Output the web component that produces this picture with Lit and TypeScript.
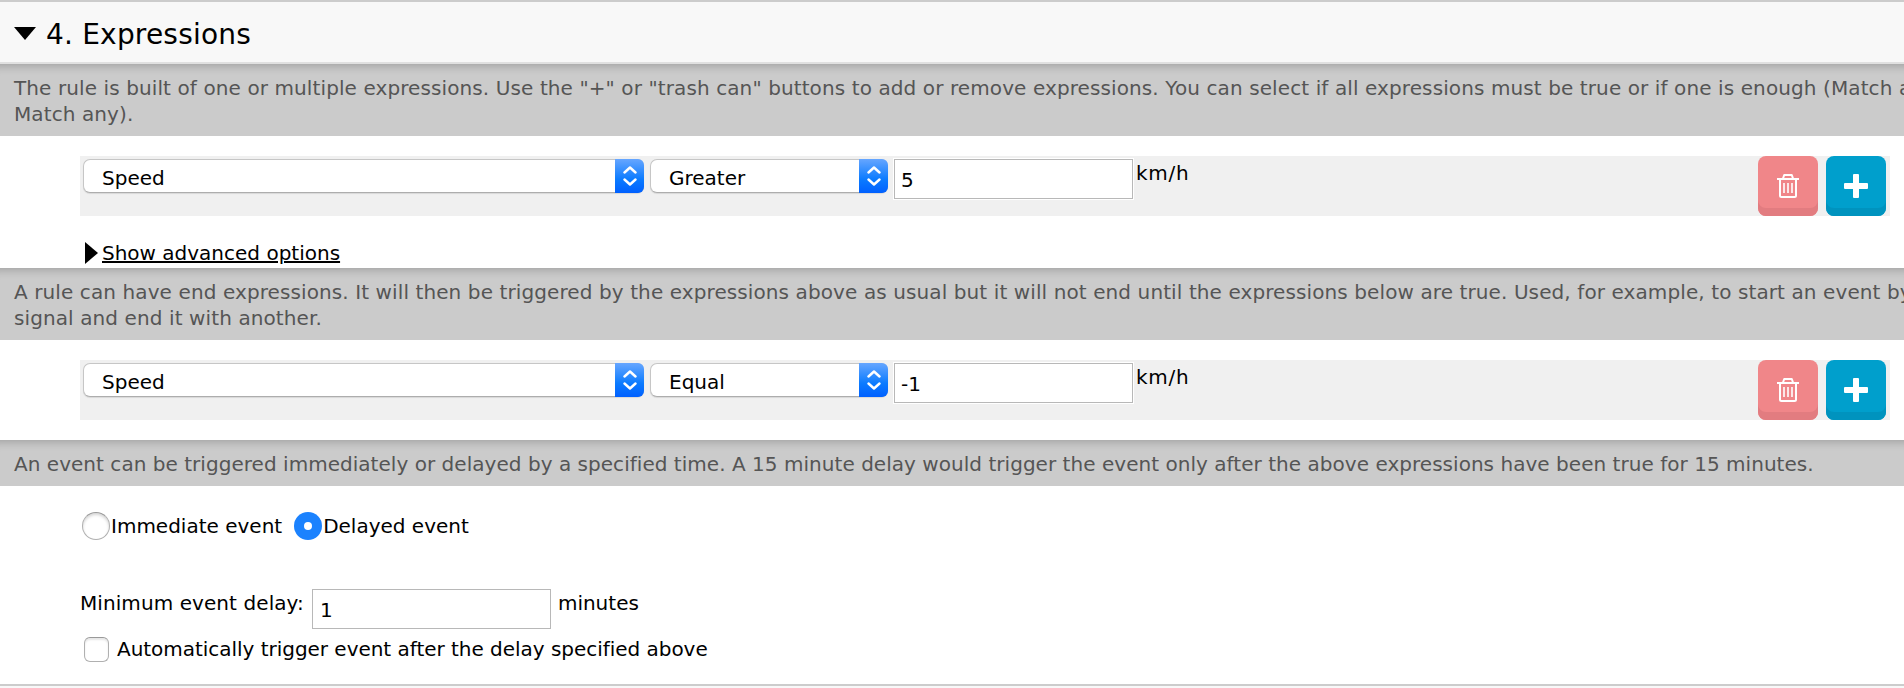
import { LitElement, html, css, svg } from "lit";
import { customElement, property } from "lit/decorators.js";

const trashIcon = svg`<svg width="24" height="26" viewBox="0 0 24 26" fill="none" stroke="#fff" stroke-width="2">
  <path d="M1 6H23" /><path d="M7 5.5L8.2 2H15.8L17 5.5" stroke-linejoin="round" />
  <path d="M4 6V22.5Q4 24 5.5 24H18.5Q20 24 20 22.5V6" />
  <path d="M8 10V20M12 10V20M16 10V20" stroke-width="1.6" /></svg>`;

const plusIcon = svg`<svg width="24" height="24" viewBox="0 0 24 24" fill="#fff">
  <path d="M10 0H14Q15 0 15 1V9H23Q24 9 24 10V14Q24 15 23 15H15V23Q15 24 14 24H10Q9 24 9 23V15H1Q0 15 0 14V10Q0 9 1 9H9V1Q9 0 10 0Z" /></svg>`;

@customElement("expression-row")
class ExpressionRow extends LitElement {
  @property() signal = "";
  @property() operator = "";
  @property() value = "";
  @property() unit = "";

  static styles = css`
    :host { display: flex; height: 60px; margin-left: 80px; margin-right: 14px; background: #f0f0f0; align-items: flex-start; line-height: 26px; }
    .select { display: flex; height: 34px; margin-top: 3px; box-sizing: border-box; border: 1px solid #c6c6c6; border-bottom-color: #adadad; border-right: 0; border-radius: 7px; background: #fff; box-shadow: 0 1px 1px rgba(0,0,0,.1); }
    .signal { width: 561px; margin-left: 3px; }
    .operator { width: 238px; margin-left: 6px; }
    .label { flex: 1; padding: 5px 0 0 18px; }
    .arrows { width: 29px; margin: -1px 0; display: flex; align-items: center; justify-content: center; border-radius: 0 6px 6px 0; background: linear-gradient(#66a6ff, #0b7bff 60%, #0060ff); }
    .input { width: 239px; height: 40px; box-sizing: border-box; margin: 3px 0 0 6px; border: 1px solid #b8b8b8; box-shadow: 0 0 0 1px #fff; background: #fff; padding: 7px 0 0 6px; }
    .unit { padding: 4px 0 0 3px; flex: 1; letter-spacing: .7px; }
    .btn { width: 60px; height: 60px; box-sizing: border-box; border-radius: 8px; display: flex; align-items: center; justify-content: center; margin-right: 8px; }
    .remove { background: #f08689; box-shadow: inset 0 -8px 0 #e27c80; }
    .add { background: #009fcc; box-shadow: inset 0 -8px 0 #0093be; margin-right: 4px; }
  `;

  private select(kind: string, text: string) {
    return html`<div class="select ${kind}"><span class="label">${text}</span>
      <span class="arrows"><svg width="14" height="20" viewBox="0 0 14 20" fill="none" stroke="#fff" stroke-width="2.4" stroke-linecap="round" stroke-linejoin="round"><path d="M1.5 6.5L7 1.5L12.5 6.5M1.5 13.5L7 18.5L12.5 13.5" /></svg></span></div>`;
  }

  render() {
    return html`${this.select("signal", this.signal)}${this.select("operator", this.operator)}
      <div class="input">${this.value}</div><span class="unit">${this.unit}</span>
      <div class="btn remove">${trashIcon}</div><div class="btn add">${plusIcon}</div>`;
  }
}

@customElement("app-root")
class AppRoot extends LitElement {
  static styles = css`
    :host { display: block; width: 1904px; height: 688px; overflow: hidden; background: #fff; font: 20px/26px "DejaVu Sans", Verdana, sans-serif; color: #000; white-space: nowrap; }
    .head { box-sizing: border-box; height: 64px; border-top: 2px solid #ccc; border-bottom: 2px solid #e0e0e0; background: #f8f8f8; display: flex; align-items: center; padding-left: 14px; font-size: 28px; gap: 10px; letter-spacing: .2px; }
    .head span { padding-top: 5px; }
    .head svg { margin-top: 3px; }
    .note { box-sizing: border-box; padding: 11px 0 9px 14px; background: #cbcbcb; color: #555; box-shadow: inset 0 12px 10px -10px rgba(0,0,0,.22); overflow: hidden; letter-spacing: .1px; }
    .single { height: 46px; letter-spacing: .035px; }
    .body { padding: 20px 0; }
    .first { height: 132px; box-sizing: border-box; }
    .adv { display: flex; align-items: center; margin: 24px 0 0 85px; gap: 4px; }
    .adv span { text-decoration: underline; }
    .settings { box-sizing: border-box; height: 198px; padding-left: 80px; }
    .radios { display: flex; align-items: center; padding-top: 26px; height: 28px; }
    .radios span { padding-left: 1px; }
    .radio { box-sizing: border-box; width: 28px; height: 28px; border: 1px solid #b0b0b0; border-top-color: #999; border-radius: 50%; box-shadow: inset 0 2px 3px rgba(0,0,0,.16); margin-left: 2px; }
    .on { border: 0; background: #1b82fe; display: flex; align-items: center; justify-content: center; margin-left: 12px; box-shadow: none; }
    .on::after { content: ""; width: 8px; height: 8px; border-radius: 50%; background: #fff; }
    .delay { display: flex; padding-top: 49px; }
    .delay span { padding-top: 1px; }
    .prompt { letter-spacing: .08px; }
    .input { box-sizing: border-box; width: 239px; height: 40px; border: 1px solid #b8b8b8; padding: 7px 0 0 7px; margin: 0 7px 0 8px; }
    .auto { display: flex; align-items: center; margin-top: 7px; gap: 8px; padding-left: 4px; letter-spacing: -.03px; }
    .check { box-sizing: border-box; width: 25px; height: 25px; border: 1px solid #b0b0b0; border-top-color: #999; border-radius: 6px; box-shadow: inset 0 2px 2px rgba(0,0,0,.1); }
    .next { height: 4px; box-sizing: border-box; border-top: 2px solid #ccc; background: #f8f8f8; }
  `;

  render() {
    return html`
      <div class="head"><svg width="22" height="13" viewBox="0 0 22 13"><path d="M0 0H22L11 13Z" /></svg><span>4. Expressions</span></div>
      <div class="note">The rule is built of one or multiple expressions. Use the "+" or "trash can" buttons to add or remove expressions. You can select if all expressions must be true or if one is enough (Match a<br />Match any).</div>
      <div class="body first">
        <expression-row signal="Speed" operator="Greater" value="5" unit="km/h"></expression-row>
        <div class="adv"><svg width="13" height="22"><path d="M0 0L13 11L0 22Z" /></svg><span>Show advanced options</span></div>
      </div>
      <div class="note">A rule can have end expressions. It will then be triggered by the expressions above as usual but it will not end until the expressions below are true. Used, for example, to start an event by<br />signal and end it with another.</div>
      <div class="body"><expression-row signal="Speed" operator="Equal" value="-1" unit="km/h"></expression-row></div>
      <div class="note single">An event can be triggered immediately or delayed by a specified time. A 15 minute delay would trigger the event only after the above expressions have been true for 15 minutes.</div>
      <div class="settings">
        <div class="radios"><i class="radio"></i><span>Immediate event</span><i class="radio on"></i><span>Delayed event</span></div>
        <div class="delay"><span class="prompt">Minimum event delay:</span><div class="input">1</div><span>minutes</span></div>
        <div class="auto"><i class="check"></i><span>Automatically trigger event after the delay specified above</span></div>
      </div>
      <div class="next"></div>`;
  }
}
